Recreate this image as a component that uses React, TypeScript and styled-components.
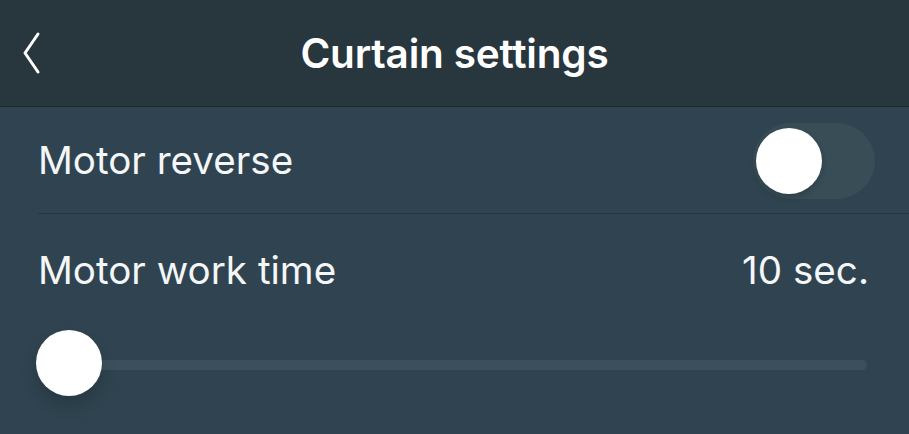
import React, { useState } from "react";
import styled, { createGlobalStyle } from "styled-components";

const Global = createGlobalStyle`
  html, body { margin: 0; padding: 0; background: #2f4450; }
  body { font-family: Inter, "Open Sans", sans-serif; -webkit-font-smoothing: antialiased; }
`;

const Screen = styled.div`
  width: 909px;
  height: 434px;
  background: #2f4450;
  color: #ffffff;
  overflow: hidden;
  display: flex;
  flex-direction: column;
`;

const Header = styled.header`
  height: 106px;
  flex: none;
  background: #28363d;
  border-bottom: 1px solid #1f2b31;
  display: grid;
  grid-template-columns: 100px 1fr 100px;
  align-items: center;
`;

const BackButton = styled.button`
  background: none;
  border: none;
  padding: 2px 0 0 22px;
  display: flex;
  align-items: center;
  cursor: pointer;
  height: 100%;
`;

const Title = styled.h1`
  margin: 0;
  text-align: center;
  font-size: 40.5px;
  font-weight: 600;
  letter-spacing: -0.2px;
  color: #ffffff;
`;

const Row = styled.div`
  height: 106px;
  flex: none;
  margin-left: 38px;
  padding-right: 34px;
  display: flex;
  align-items: center;
  justify-content: space-between;
  border-bottom: 1px solid #26363f;
`;

const Text = styled.span`
  font-size: 38.6px;
  font-weight: 400;
  color: #f4f6f7;
`;

const Track = styled.button<{ $on: boolean }>`
  position: relative;
  width: 122px;
  height: 76px;
  border-radius: 38px;
  border: none;
  padding: 0;
  background: ${(p) => (p.$on ? "#4cd964" : "#394d57")};
  cursor: pointer;
  margin-top: 2px;
`;

const Knob = styled.span<{ $on: boolean }>`
  position: absolute;
  top: 5px;
  left: ${(p) => (p.$on ? "52px" : "3px")};
  width: 66px;
  height: 66px;
  border-radius: 50%;
  background: #ffffff;
  box-shadow: 0 3px 6px rgba(0, 0, 0, 0.2);
`;

const SliderSection = styled.div`
  padding: 0 40px 0 38px;
  display: flex;
  flex-direction: column;
`;

const LabelRow = styled.div`
  display: flex;
  justify-content: space-between;
  align-items: center;
  height: 112px;
`;

const SliderWrap = styled.div`
  position: relative;
  height: 66px;
  display: flex;
  align-items: center;
  margin-top: 6px;
  margin-right: 2px;
`;

const SliderRail = styled.div`
  width: 100%;
  height: 10px;
  border-radius: 5px;
  background: #3c505b;
`;

const SliderThumb = styled.div`
  position: absolute;
  left: -2px;
  top: -2px;
  width: 66px;
  height: 66px;
  border-radius: 50%;
  background: #ffffff;
  box-shadow: 0 10px 16px rgba(0, 0, 0, 0.16);
`;

export default function App() {
  const [on, setOn] = useState(false);
  return (
    <Screen>
      <Global />
      <Header>
        <BackButton aria-label="Back">
          <svg width="20" height="46" viewBox="0 0 20 46">
            <polyline points="16,3 3,22 16,41" fill="none" stroke="#ffffff" strokeWidth="3" strokeLinecap="round" strokeLinejoin="round" />
          </svg>
        </BackButton>
        <Title>Curtain settings</Title>
        <div />
      </Header>
      <Row>
        <Text>Motor reverse</Text>
        <Track $on={on} onClick={() => setOn(!on)}>
          <Knob $on={on} />
        </Track>
      </Row>
      <SliderSection>
        <LabelRow>
          <Text>Motor work time</Text>
          <Text>10 sec.</Text>
        </LabelRow>
        <SliderWrap>
          <SliderRail />
          <SliderThumb />
        </SliderWrap>
      </SliderSection>
    </Screen>
  );
}
